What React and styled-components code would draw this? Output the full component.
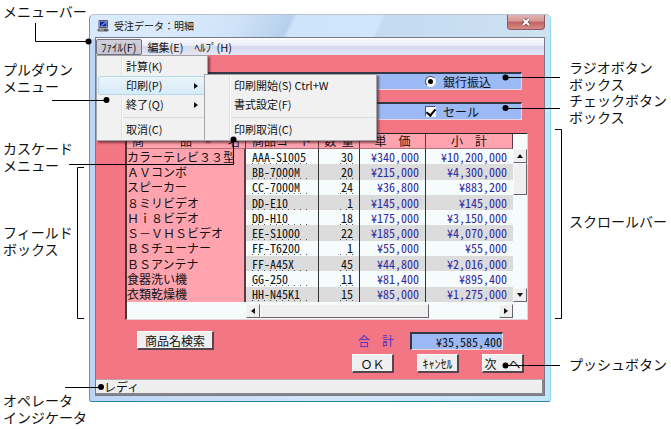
import React from 'react';
import styled, { createGlobalStyle, css } from 'styled-components';

const GlobalStyle = createGlobalStyle`
  * {
    box-sizing: border-box;
  }

  body {
    margin: 0;
    background: #fff;
    color: #111;
    font-family: "Noto Sans CJK JP", sans-serif;
    font-size: 12px;
  }

  button, input {
    margin: 0;
    font: inherit;
    color: inherit;
  }
`;

const Figure = styled.div`
  position: relative;
  display: grid;
  grid-template-columns: 89px minmax(0, 1fr) 120px;
  min-width: 560px;
`;

const Notes = styled.div`
  display: grid;
  align-content: start;
  grid-template-rows: ${props => props.$rows};
  padding: ${props => props.$pad};
  font-size: 14px;
  line-height: 17px;
  white-space: nowrap;
`;

const Note = styled.p`
  margin: 0;
`;

const Leaders = styled.svg`
  position: absolute;
  z-index: 5;
  top: 0;
  ${props => props.$side}: 0;
  pointer-events: none;
`;

const Frame = styled.section`
  margin-top: 14px;
  padding: 0 5px 5px;
  align-self: start;
  border: 1px solid #85899c;
  border-top-color: #b9c3d2;
  border-right-color: #8fdcf2;
  border-bottom-color: #2587a6;
  border-radius: 5px 5px 3px 3px;
  background:
    linear-gradient(115deg, #d9eafc 0 18%, #cfe3f8 32%, #b6cfec 43%, #cde4fb 44%, #cfe6fb 62%, #c3daf0 63%, #cfe2f2 100%) top / 100% 24px no-repeat,
    linear-gradient(90deg, #bcd5f5, #d3e5fb 50%, #c3e6fb);
`;

const TitleBar = styled.header`
  display: flex;
  align-items: center;
  gap: 5px;
  height: 22px;
  padding-left: 2px;
`;

const Title = styled.h1`
  flex: 1;
  margin: 0;
  font-size: 10px;
  line-height: 16px;
  font-weight: 400;
`;

const CloseButton = styled.button`
  align-self: flex-start;
  display: flex;
  align-items: center;
  justify-content: center;
  width: 38px;
  height: 15px;
  padding: 0;
  border: 1px solid #8a5a60;
  border-top: 0;
  border-radius: 0 0 4px 4px;
  background: linear-gradient(#e3b4b1, #d59592 45%, #c0605f 50%, #d58d89);
`;

const Inner = styled.div`
  border: 1px solid #777985;
`;

const MenuBar = styled.nav`
  position: relative;
  display: flex;
  align-items: center;
  gap: 1px;
  height: 17px;
  background: linear-gradient(#fbfcfe, #e9ecf7 45%, #d5d9ec 50%, #e2e6f4);
  font-size: 11px;
`;

const MenuTitle = styled.button`
  height: 16px;
  padding: 0 4px;
  border: 1px solid ${props => (props.$open ? '#74727f' : 'transparent')};
  border-radius: 2px;
  background: ${props => (props.$open ? 'linear-gradient(#d0cfda, #c4c5d6)' : 'none')};
  line-height: 14px;
`;

const Popup = styled.ul`
  position: absolute;
  z-index: 2;
  top: ${props => (props.$sub ? '-2px' : '17px')};
  left: ${props => (props.$sub ? '106px' : '0')};
  width: ${props => (props.$sub ? '173px' : '112px')};
  margin: 0;
  padding: 1px;
  border: 1px solid #a5a5a8;
  background: linear-gradient(90deg, transparent 24px, #dfe1e3 24px 25px, #fafafa 25px 26px, transparent 26px) #f1f1f1;
  box-shadow: 2px 2px 2px rgba(60, 20, 30, .6);
  list-style: none;
`;

const Item = styled.li`
  position: relative;
`;

const ItemButton = styled.button`
  display: flex;
  align-items: center;
  justify-content: space-between;
  width: 100%;
  height: 19px;
  padding: 0 6px 0 27px;
  border: 1px solid transparent;
  border-radius: 2px;
  background: none;
  line-height: 15px;
  white-space: nowrap;
  ${props => props.$active && css`
    border-color: #b5d8ed;
    background: linear-gradient(#eaf4fb, #d6ebf8);
  `}
`;

const Separator = styled.li`
  height: 6px;
  margin-left: 25px;
  border-top: 3px solid #f1f1f1;

  &::after {
    content: '';
    display: block;
    border-top: 1px solid #d9dcde;
  }
`;

const Client = styled.main`
  padding: 17px 16px 6px 29px;
  background: #f27683;
`;

const OptionBar = styled.div`
  display: flex;
  justify-content: flex-end;
  align-items: center;
  height: 18px;
  margin: 0 6px 12px 0;
  border: 1px solid #e8d5de;
  border-top: 2px solid #333847;
  background: #9bb9f5;
`;

const Option = styled.label`
  display: flex;
  align-items: center;
  gap: 7px;
  width: 96px;
  line-height: 15px;
`;

const Tick = styled.input`
  appearance: none;
  display: grid;
  place-items: center;
  width: 11px;
  height: 11px;
  border: 1px solid #4d5262;
  border-right-color: #eee;
  border-bottom-color: #eee;
  border-radius: ${props => (props.type === 'radio' ? '50%' : '0')};
  background: #fff;

  &[type='radio']::after {
    content: '';
    width: 5px;
    height: 5px;
    border-radius: 50%;
    background: #000;
  }

  &[type='checkbox']::after {
    content: '';
    width: 4px;
    height: 7px;
    margin-bottom: 2px;
    border: solid #000;
    border-width: 0 2px 2px 0;
    transform: rotate(40deg);
  }
`;

const Sheet = styled.div`
  display: grid;
  grid-template-columns: minmax(0, 1fr) 14px;
  grid-template-rows: 168px 17px;
  margin: 13px 0 11px;
  border: 1px solid #e3d3d6;
  border-top-color: #222;
  border-left: 2px solid #4a3238;
  background: #f6fbfc;
`;

const Table = styled.table`
  width: 100%;
  height: 168px;
  table-layout: fixed;
  border-collapse: separate;
  border-spacing: 0;
  line-height: 14px;
  white-space: pre;

  th, td {
    padding: 0;
  }

  tbody tr:nth-child(even) {
    background: #dcdcdc;
  }
`;

const HeadCell = styled.th`
  height: 15px;
  border-right: 1px solid #5d3a42;
  border-bottom: 1px solid #b0707a;
  background: #ffa3ae;
  font-weight: 400;
`;

const NameCell = styled.td`
  border-right: 2px solid #5d3a42;
  background: #ffa3ae;
`;

const FieldCell = styled.td`
  border-right: 1px solid #333;
  font-feature-settings: "hwid";
  text-align: ${props => (props.$right ? 'right' : 'left')};
`;

const Dotted = styled.span`
  display: inline-block;
  width: ${props => props.$width};
  margin: 0 6px;
  background: repeating-linear-gradient(90deg, #555 0 1px, transparent 1px 6px) bottom / 100% 1px no-repeat;
`;

const MoneyCell = styled.td`
  border-right: ${props => (props.$last ? '0' : '1px solid #333')};
  color: #2f2aa0;
  font-feature-settings: "hwid";
  text-align: right;

  && {
    padding-right: 6px;
  }
`;

const VScroll = styled.div`
  display: flex;
  flex-direction: column;
  padding-top: 15px;
`;

const HScroll = styled.div`
  display: flex;
  align-items: center;
  height: 17px;
  padding-left: 119px;
`;

const raised = css`
  border: 1px solid #f8f8f8;
  border-right-color: #6b6470;
  border-bottom-color: #6b6470;
  background: #efefef;
`;

const ScrollButton = styled.button`
  ${raised}
  display: grid;
  place-items: center;
  flex: none;
  width: 14px;
  height: 14px;
  padding: 0;
`;

const Thumb = styled.div`
  ${raised}
  width: ${props => (props.$vertical ? '14px' : '169px')};
  height: ${props => (props.$vertical ? '32px' : '14px')};
`;

const Spring = styled.div`
  flex: 1;
`;

const Row = styled.div`
  display: flex;
  align-items: center;
  height: 19px;
  margin-bottom: ${props => props.$gap || '0'};
  padding: ${props => props.$pad};
`;

const PushButton = styled.button`
  width: ${props => props.$width || '42px'};
  height: 19px;
  padding: 0;
  border: 1px solid #fafafa;
  border-right: 2px solid #54464c;
  border-bottom: 2px solid #54464c;
  background: #efefef;
  line-height: 15px;
  white-space: pre;
`;

const TotalLabel = styled.label`
  margin: 0 16px 0 auto;
  color: #4a2fc4;
  white-space: pre;
`;

const TotalField = styled.input`
  width: 93px;
  height: 18px;
  padding: 0;
  border: 1px solid #e8d5de;
  border-top: 2px solid #333847;
  border-left: 2px solid #333847;
  background: #9bb9f5;
  line-height: 14px;
  text-align: right;
  font-feature-settings: "hwid";
`;

const Buttons = styled.div`
  display: flex;
  gap: 23px;
  margin-left: auto;
`;

const StatusBar = styled.footer`
  height: 16px;
  padding-left: 8px;
  border-top: 1px solid #b9a9ad;
  border-right: 2px solid #85858c;
  border-bottom: 2px solid #85858c;
  background: #eee;
  line-height: 13px;
`;

const rows = [
  ['カラーテレビ３３型', 'AAA-S1005', 30, '340,000', '10,200,000'],
  ['ＡＶコンボ', 'BB-7000M', 20, '215,000', '4,300,000'],
  ['スピーカー', 'CC-7000M', 24, '36,800', '883,200'],
  ['８ミリビデオ', 'DD-E10', 1, '145,000', '145,000'],
  ['Ｈｉ８ビデオ', 'DD-H10', 18, '175,000', '3,150,000'],
  ['Ｓ－ＶＨＳビデオ', 'EE-S1000', 22, '185,000', '4,070,000'],
  ['ＢＳチューナー', 'FF-T6200', 1, '55,000', '55,000'],
  ['ＢＳアンテナ', 'FF-A45X', 45, '44,800', '2,016,000'],
  ['食器洗い機', 'GG-250', 11, '81,400', '895,400'],
  ['衣類乾燥機', 'HH-N45K1', 15, '85,000', '1,275,000'],
];

const arrows = {
  up: 'M0 5 L3 1 L6 5 Z',
  down: 'M0 1 L3 5 L6 1 Z',
  left: 'M5 0 L1 3 L5 6 Z',
  right: 'M1 0 L5 3 L1 6 Z',
};

const Arrow = ({ dir }) => (
  <svg width="6" height="6" viewBox="0 0 6 6" aria-hidden="true">
    <path d={arrows[dir]} fill="#111" />
  </svg>
);

const ComputerIcon = () => (
  <svg width="12" height="12" viewBox="0 0 12 12" aria-hidden="true">
    <path d="M2 .5h8.5v7H2z" fill="#c9ccd6" stroke="#555a68" />
    <path d="M3 1.5h6.5v5H3z" fill="#1020a0" />
    <path d="M4 5l4-3h1v1L5 6H4z" fill="#5f8bea" />
    <path d="M1 9h10v2H1z" fill="#b9bcc4" stroke="#333" strokeWidth=".7" />
    <path d="M7 10h3" stroke="#222" />
  </svg>
);

const FileMenu = () => (
  <Popup>
    <Item><ItemButton>計算(K)</ItemButton></Item>
    <Item>
      <ItemButton $active>印刷(P)<Arrow dir="right" /></ItemButton>
      <Popup $sub>
        <Item><ItemButton>印刷開始(S) Ctrl+W</ItemButton></Item>
        <Item><ItemButton>書式設定(F)</ItemButton></Item>
        <Separator />
        <Item><ItemButton>印刷取消(C)</ItemButton></Item>
      </Popup>
    </Item>
    <Item><ItemButton>終了(Q)<Arrow dir="right" /></ItemButton></Item>
    <Separator />
    <Item><ItemButton>取消(C)</ItemButton></Item>
  </Popup>
);

const OrderSheet = () => (
  <Sheet>
    <Table>
      <colgroup>
        <col style={{ width: 119 }} />
        <col style={{ width: 73 }} />
        <col style={{ width: 41 }} />
        <col style={{ width: 66 }} />
        <col />
      </colgroup>
      <thead>
        <tr>
          <HeadCell>商　　　品　　　名</HeadCell>
          <HeadCell>商品コード</HeadCell>
          <HeadCell>数  量</HeadCell>
          <HeadCell>単　価</HeadCell>
          <HeadCell>小　計</HeadCell>
        </tr>
      </thead>
      <tbody>
        {rows.map(([name, code, count, price, subtotal]) => (
          <tr key={code}>
            <NameCell>{name}</NameCell>
            <FieldCell><Dotted $width="60px">{code}</Dotted></FieldCell>
            <FieldCell $right><Dotted $width="13px">{count}</Dotted></FieldCell>
            <MoneyCell>{`¥${price}`}</MoneyCell>
            <MoneyCell $last>{`¥${subtotal}`}</MoneyCell>
          </tr>
        ))}
      </tbody>
    </Table>
    <VScroll>
      <ScrollButton aria-label="上へ"><Arrow dir="up" /></ScrollButton>
      <Thumb $vertical />
      <Spring />
      <ScrollButton aria-label="下へ"><Arrow dir="down" /></ScrollButton>
    </VScroll>
    <HScroll>
      <ScrollButton aria-label="左へ"><Arrow dir="left" /></ScrollButton>
      <Thumb />
      <Spring />
      <ScrollButton aria-label="右へ"><Arrow dir="right" /></ScrollButton>
    </HScroll>
  </Sheet>
);

const OrderWindow = () => (
  <Frame>
    <TitleBar>
      <ComputerIcon />
      <Title>受注データ：明細</Title>
      <CloseButton aria-label="閉じる">
        <svg width="10" height="8" viewBox="0 0 10 8" aria-hidden="true">
          <path d="M2 1l6 6M8 1L2 7" stroke="#6b4a50" strokeWidth="3.4" />
          <path d="M2 1l6 6M8 1L2 7" stroke="#fff" strokeWidth="2" />
        </svg>
      </CloseButton>
    </TitleBar>
    <Inner>
      <MenuBar>
        <MenuTitle $open>ﾌｧｲﾙ(F)</MenuTitle>
        <MenuTitle>編集(E)</MenuTitle>
        <MenuTitle>ﾍﾙﾌﾟ(H)</MenuTitle>
        <FileMenu />
      </MenuBar>
      <Client>
        <OptionBar>
          <Option><Tick type="radio" name="payment" defaultChecked />銀行振込</Option>
        </OptionBar>
        <OptionBar>
          <Option><Tick type="checkbox" defaultChecked />セール</Option>
        </OptionBar>
        <OrderSheet />
        <Row $pad="0 25px 0 12px" $gap="4px">
          <PushButton $width="77px">商品名検索</PushButton>
          <TotalLabel htmlFor="total">合　計</TotalLabel>
          <TotalField id="total" readOnly value="¥35,585,400" />
        </Row>
        <Row $pad="0 4px 0 0">
          <Buttons>
            <PushButton>ＯＫ</PushButton>
            <PushButton>ｷｬﾝｾﾙ</PushButton>
            <PushButton>次　へ</PushButton>
          </Buttons>
        </Row>
      </Client>
      <StatusBar>レディ</StatusBar>
    </Inner>
  </Frame>
);

const App = () => (
  <>
    <GlobalStyle />
    <Figure>
      <Notes $rows="58px 79px 84px 168px auto" $pad="3px 0 0 3px">
        <Note>メニューバー</Note>
        <Note>プルダウン<br />メニュー</Note>
        <Note>カスケード<br />メニュー</Note>
        <Note>フィールド<br />ボックス</Note>
        <Note>オペレータ<br />インジケータ</Note>
      </Notes>
      <OrderWindow />
      <Notes $rows="33px 121px 143px auto" $pad="59px 0 0 18px">
        <Note>ラジオボタン<br />ボックス</Note>
        <Note>チェックボタン<br />ボックス</Note>
        <Note>スクロールバー</Note>
        <Note>プッシュボタン</Note>
      </Notes>

      <Leaders $side="left" width="240" height="400" viewBox="0 0 240 400">
        <path
          d="M35.5 23V41.5H88M52 100.5H106M69 164.5H233.5V139M84 167.5H77.5V318.5H84M65 387.5H101"
          fill="none"
          stroke="#000"
        />
        <circle cx="88.5" cy="41.5" r="3" />
        <circle cx="106.5" cy="100" r="3" />
        <circle cx="233.5" cy="139.5" r="3" />
        <circle cx="101" cy="387" r="3" />
      </Leaders>
      <Leaders $side="right" width="171" height="400" viewBox="500 0 171 400">
        <path d="M505 77.5H560M505 108.5H560M505 365.5H560M555 129.5H561.5V318.5H555" fill="none" stroke="#000" />
        <circle cx="505.5" cy="77.5" r="3" />
        <circle cx="505.5" cy="108" r="3" />
        <circle cx="505.5" cy="365.5" r="3" />
      </Leaders>
    </Figure>
  </>
);

export default App;
